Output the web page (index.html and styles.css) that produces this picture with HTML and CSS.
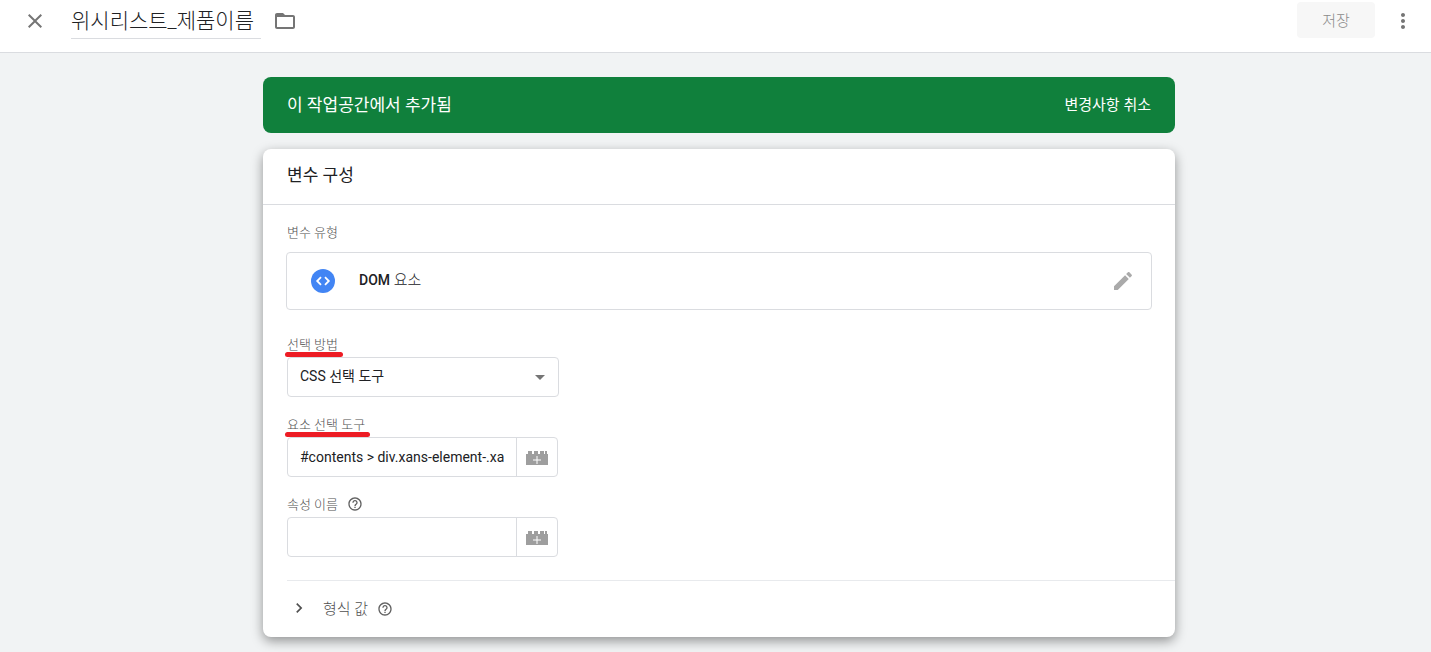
FILE: index.html
```html
<!DOCTYPE html>
<html lang="ko">
<head>
  <meta charset="UTF-8">
  <meta name="viewport" content="width=device-width, initial-scale=1">
  <title>위시리스트_제품이름</title>
  <link rel="stylesheet" href="styles.css">
</head>
<body>
  <header class="top-bar">
    <button type="button" class="icon-button" aria-label="닫기">
      <svg viewBox="0 0 24 24"><path d="M19 6.4L17.6 5 12 10.6 6.4 5 5 6.4 10.6 12 5 17.6 6.4 19 12 13.4 17.6 19 19 17.6 13.4 12z"/></svg>
    </button>
    <input type="text" class="title-input" aria-label="변수 이름" value="위시리스트_제품이름">
    <button type="button" class="icon-button" aria-label="폴더">
      <svg viewBox="0 0 24 24"><path d="M20 6h-8l-2-2H4c-1.1 0-2 .9-2 2v12c0 1.1.9 2 2 2h16c1.1 0 2-.9 2-2V8c0-1.1-.9-2-2-2zm0 12H4V8h16v10z"/></svg>
    </button>
    <div class="top-actions">
      <button type="button" class="save-button" disabled>저장</button>
      <button type="button" class="icon-button" aria-label="더보기">
        <svg viewBox="0 0 24 24"><path d="M12 8c1.1 0 2-.9 2-2s-.9-2-2-2-2 .9-2 2 .9 2 2 2zm0 2c-1.1 0-2 .9-2 2s.9 2 2 2 2-.9 2-2-.9-2-2-2zm0 6c-1.1 0-2 .9-2 2s.9 2 2 2 2-.9 2-2-.9-2-2-2z"/></svg>
      </button>
    </div>
  </header>

  <main>
    <!-- Workspace status -->
    <div class="banner">
      <span class="banner-text">이 작업공간에서 추가됨</span>
      <a href="#" class="banner-link">변경사항 취소</a>
    </div>

    <!-- Variable configuration -->
    <section class="card">
      <h2 class="card-title">변수 구성</h2>

      <form class="card-body">
        <div class="field-label">변수 유형</div>
        <div class="type-box">
          <svg class="type-icon" viewBox="0 0 24 24">
            <circle cx="12" cy="12" r="12" fill="#4285f4"/>
            <path d="M10 8.2L6.2 12l3.8 3.8M14 8.2l3.800 3.800-3.800 3.800" fill="none" stroke="#fff" stroke-width="1.8"/>
          </svg>
          <span class="type-name"><b>DOM</b> 요소</span>
          <button type="button" class="icon-button edit-button" aria-label="수정">
            <svg viewBox="0 0 24 24"><path d="M3 17.250V21h3.750L17.810 9.940l-3.750-3.750L3 17.250zM20.710 7.040c.39-.39.39-1.020 0-1.410l-2.340-2.340c-.39-.39-1.020-.39-1.410 0l-1.830 1.830 3.750 3.750 1.830-1.830z"/></svg>
          </button>
        </div>

        <div class="field">
          <div class="field-label"><label class="marked" for="method">선택 방법</label></div>
          <div class="select-box">
            <select id="method">
              <option>CSS 선택 도구</option>
            </select>
            <svg class="select-arrow" viewBox="0 0 10 5"><path d="M0 0h10L5 5z"/></svg>
          </div>
        </div>

        <div class="field">
          <div class="field-label"><label class="marked" for="selector">요소 선택 도구</label></div>
          <div class="input-group">
            <input type="text" id="selector" value="#contents &gt; div.xans-element-.xa">
            <button type="button" class="brick-button" aria-label="변수 선택">
              <svg viewBox="0 0 24 14"><path d="M1 3h2V0h4v3h2V0h4v3h2V0h4v3h1V0h2v3h1v11H1z"/><path d="M12 5v8M8 9h8" class="brick-plus"/></svg>
            </button>
          </div>
        </div>

        <div class="field">
          <div class="field-label">
            <label for="attribute">속성 이름</label>
            <svg class="help-icon" viewBox="0 0 24 24"><path d="M11 18h2v-2h-2v2zm1-16C6.480 2 2 6.480 2 12s4.480 10 10 10 10-4.480 10-10S17.520 2 12 2zm0 18c-4.410 0-8-3.590-8-8s3.590-8 8-8 8 3.590 8 8-3.590 8-8 8zm0-14c-2.210 0-4 1.790-4 4h2c0-1.100.9-2 2-2s2 .9 2 2c0 2-3 1.750-3 5h2c0-2.250 3-2.500 3-5 0-2.210-1.790-4-4-4z"/></svg>
          </div>
          <div class="input-group">
            <input type="text" id="attribute">
            <button type="button" class="brick-button" aria-label="변수 선택">
              <svg viewBox="0 0 24 14"><path d="M1 3h2V0h4v3h2V0h4v3h2V0h4v3h1V0h2v3h1v11H1z"/><path d="M12 5v8M8 9h8" class="brick-plus"/></svg>
            </button>
          </div>
        </div>
      </form>

      <div class="format-row">
        <button type="button" class="format-toggle">
          <svg class="chevron" viewBox="0 0 24 24"><path d="M10 6L8.600 7.400 13.200 12l-4.600 4.600L10 18l6-6z"/></svg>
          형식 값
        </button>
        <svg class="help-icon" viewBox="0 0 24 24"><path d="M11 18h2v-2h-2v2zm1-16C6.480 2 2 6.480 2 12s4.480 10 10 10 10-4.480 10-10S17.520 2 12 2zm0 18c-4.410 0-8-3.590-8-8s3.590-8 8-8 8 3.590 8 8-3.590 8-8 8zm0-14c-2.210 0-4 1.790-4 4h2c0-1.100.9-2 2-2s2 .9 2 2c0 2-3 1.750-3 5h2c0-2.250 3-2.500 3-5 0-2.210-1.790-4-4-4z"/></svg>
      </div>
    </section>
  </main>
</body>
</html>
```
FILE: styles.css
```css
* {
  margin: 0;
  padding: 0;
  box-sizing: border-box;
}

body {
  font-family: Roboto, "Noto Sans CJK KR", sans-serif;
  font-size: 15px;
  font-weight: 300;
  color: #202124;
  background: #f1f3f4;
}

button, input, select {
  font: inherit;
  color: inherit;
  border: none;
  background: none;
}

button {
  cursor: pointer;
}

svg {
  display: block;
  fill: currentColor;
}

.icon-button {
  color: #757575;
}

.icon-button svg {
  width: 24px;
  height: 24px;
}

/* Top bar */
.top-bar {
  display: flex;
  align-items: flex-start;
  height: 53px;
  padding: 2px 16px 0 23px;
  background: #fff;
  border-bottom: 1px solid #dadce0;
}

.top-bar .icon-button {
  padding: 7px 0;
}

.title-input {
  width: 190px;
  height: 37px;
  margin: 0 12px 0 24px;
  padding-bottom: 2px;
  font-size: 21px;
  border-bottom: 1px solid #dadce0;
}

.top-actions {
  display: flex;
  gap: 16px;
  margin-left: auto;
}

.save-button {
  width: 78px;
  height: 36px;
  padding-bottom: 2px;
  color: #8a8a8a;
  background: #f7f7f7;
  border-radius: 4px;
}

/* Content */
main {
  padding: 24px 24px 15px 31px;
}

.banner, .card {
  max-width: 912px;
  margin: 0 auto;
  border-radius: 8px;
}

.banner {
  display: flex;
  align-items: center;
  justify-content: space-between;
  height: 56px;
  margin-bottom: 16px;
  padding: 0 24px 4px;
  font-weight: 400;
  color: #fff;
  background: #10803c;
}

.banner-text {
  font-size: 17px;
}

.banner-link {
  color: #fff;
  text-decoration: none;
}

.card {
  background: #fff;
  box-shadow: 0 4px 12px rgba(0, 0, 0, 0.4);
}

.card-title {
  height: 56px;
  padding: 0 24px;
  font-size: 17px;
  font-weight: 400;
  line-height: 52px;
  border-bottom: 1px solid #dadce0;
}

.card-body {
  padding: 16px 24px 23px;
}

.field-label {
  display: flex;
  align-items: center;
  gap: 9px;
  height: 24px;
  padding-bottom: 4px;
  font-size: 13px;
  color: #505050;
}

.type-box {
  display: flex;
  align-items: center;
  height: 58px;
  margin: 7px -1px 23px;
  padding: 0 16px 0 24px;
  border: 1px solid #dadce0;
  border-radius: 4px;
}

.type-icon {
  width: 24px;
  height: 24px;
  margin-right: 24px;
}

.type-name {
  padding-bottom: 6px;
}

.type-name b {
  font-size: 14px;
  font-weight: 500;
}

.edit-button {
  margin-left: auto;
  color: #aaa;
}

.field {
  width: 272px;
  margin-bottom: 16px;
}

.field:last-child {
  margin-bottom: 0;
}

/* Red marker line under a label */
.marked {
  position: relative;
}

.marked::after {
  content: "";
  position: absolute;
  left: -2px;
  right: -5px;
  bottom: -4px;
  height: 5px;
  background: #ed1c24;
  border-radius: 3px;
}

.select-box {
  position: relative;
}

.select-box select {
  appearance: none;
  width: 100%;
  height: 40px;
  padding: 0 32px 2px 12px;
  font-size: 14px;
  font-weight: 400;
  border: 1px solid #dadce0;
  border-radius: 4px;
}

.select-arrow {
  position: absolute;
  top: 18px;
  right: 14px;
  width: 10px;
  height: 5px;
  color: #757575;
  pointer-events: none;
}

.input-group {
  display: flex;
  height: 40px;
  margin-right: 1px;
  border: 1px solid #dadce0;
  border-radius: 4px;
}

.input-group input {
  flex: 1;
  min-width: 0;
  padding: 0 12px;
  font-size: 14px;
  font-weight: 400;
}

.brick-button {
  width: 41px;
  padding: 2px 8px 0;
  color: #9e9e9e;
  border-left: 1px solid #dadce0;
}

.brick-button svg {
  width: 24px;
  height: 14px;
}

.brick-plus {
  fill: none;
  stroke: #fff;
  stroke-width: 1;
}

.help-icon {
  width: 16px;
  height: 16px;
  color: #616161;
}

.field-label .help-icon {
  margin-top: 2px;
}

.format-row {
  display: flex;
  align-items: center;
  gap: 9px;
  height: 57px;
  margin-left: 24px;
  padding-left: 2px;
  border-top: 1px solid #e8eaed;
}

.format-toggle {
  display: flex;
  align-items: center;
  gap: 14px;
  padding-bottom: 3px;
  color: #505050;
}

.chevron {
  width: 20px;
  height: 20px;
}
```
